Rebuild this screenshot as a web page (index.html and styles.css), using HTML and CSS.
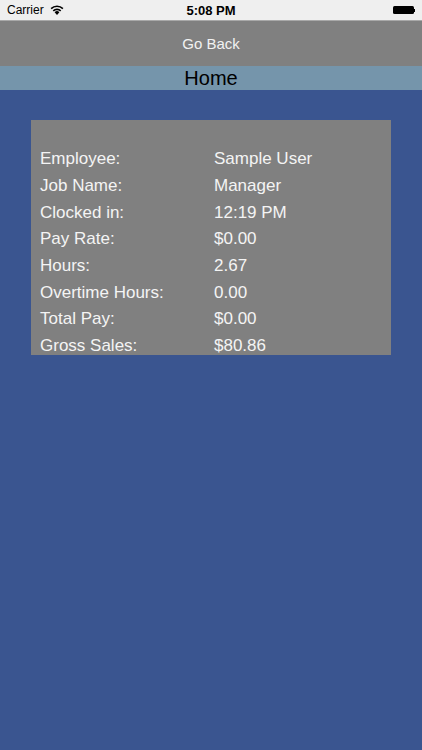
FILE: index.html
```html
<!DOCTYPE html>
<html lang="en">

<head>
  <meta charset="UTF-8">
  <meta name="viewport" content="width=device-width, initial-scale=1.0">
  <title>Home</title>
  <link rel="stylesheet" href="styles.css">
</head>

<body>
  <div class="status-bar">
    <div class="status-left">
      <span>Carrier</span>
      <svg class="wifi" width="14" height="10" viewBox="0 0 14 10">
        <path d="M7 10 L4.6 7.3 A3.4 3.4 0 0 1 9.4 7.3 Z" fill="#000" />
        <path d="M3.3 5.9 A5.3 5.3 0 0 1 10.7 5.9" stroke="#000" stroke-width="1.6" fill="none" />
        <path d="M1.1 3.6 A8.4 8.4 0 0 1 12.9 3.6" stroke="#000" stroke-width="1.6" fill="none" />
      </svg>
    </div>
    <div class="status-time">5:08 PM</div>
    <div class="status-right">
      <div class="battery"></div>
      <div class="battery-nub"></div>
    </div>
  </div>

  <div class="nav-bar">Go Back</div>
  <div class="title-bar">Home</div>

  <div class="content">
    <div class="info-card">
      <div class="info-row"><span class="label">Employee:</span><span>Sample User</span></div>
      <div class="info-row"><span class="label">Job Name:</span><span>Manager</span></div>
      <div class="info-row"><span class="label">Clocked in:</span><span>12:19 PM</span></div>
      <div class="info-row"><span class="label">Pay Rate:</span><span>$0.00</span></div>
      <div class="info-row"><span class="label">Hours:</span><span>2.67</span></div>
      <div class="info-row"><span class="label">Overtime Hours:</span><span>0.00</span></div>
      <div class="info-row"><span class="label">Total Pay:</span><span>$0.00</span></div>
      <div class="info-row"><span class="label">Gross Sales:</span><span>$80.86</span></div>
    </div>
  </div>
</body>

</html>
```

FILE: styles.css
```css
html,
body {
  height: 100%;
}

body {
  margin: 0;
  font-family: "Liberation Sans", Arial, sans-serif;
  background-color: #3a5590;
  display: flex;
  flex-direction: column;
}

.status-bar {
  height: 20px;
  background-color: #efefef;
  border-bottom: 1px solid #a9a9a9;
  display: flex;
  align-items: center;
  justify-content: space-between;
  padding: 0 7px;
  font-size: 12px;
  color: #000;
  position: relative;
}

.status-left {
  display: flex;
  align-items: center;
  gap: 6px;
}

.status-time {
  position: absolute;
  left: 0;
  right: 0;
  text-align: center;
  font-size: 13px;
  font-weight: bold;
}

.status-right {
  display: flex;
  align-items: center;
}

.battery {
  width: 21px;
  height: 8px;
  background-color: #000;
  border-radius: 1.5px;
}

.battery-nub {
  width: 1.5px;
  height: 3px;
  background-color: #000;
}

.nav-bar {
  height: 45px;
  background-color: #808080;
  color: #f2f2f2;
  font-size: 15px;
  display: flex;
  align-items: center;
  justify-content: center;
}

.title-bar {
  height: 24px;
  background-color: #7595ab;
  color: #000;
  font-size: 20px;
  display: flex;
  align-items: center;
  justify-content: center;
}

.content {
  padding: 30px 31px 0;
}

.info-card {
  width: 360px;
  height: 235px;
  box-sizing: border-box;
  padding: 26px 0 0 9px;
  background-color: #808080;
  overflow: hidden;
  color: #f4f4f4;
  font-size: 17px;
}

.info-row {
  display: flex;
  height: 26.7px;
  align-items: center;
}

.label {
  width: 174px;
}
```
